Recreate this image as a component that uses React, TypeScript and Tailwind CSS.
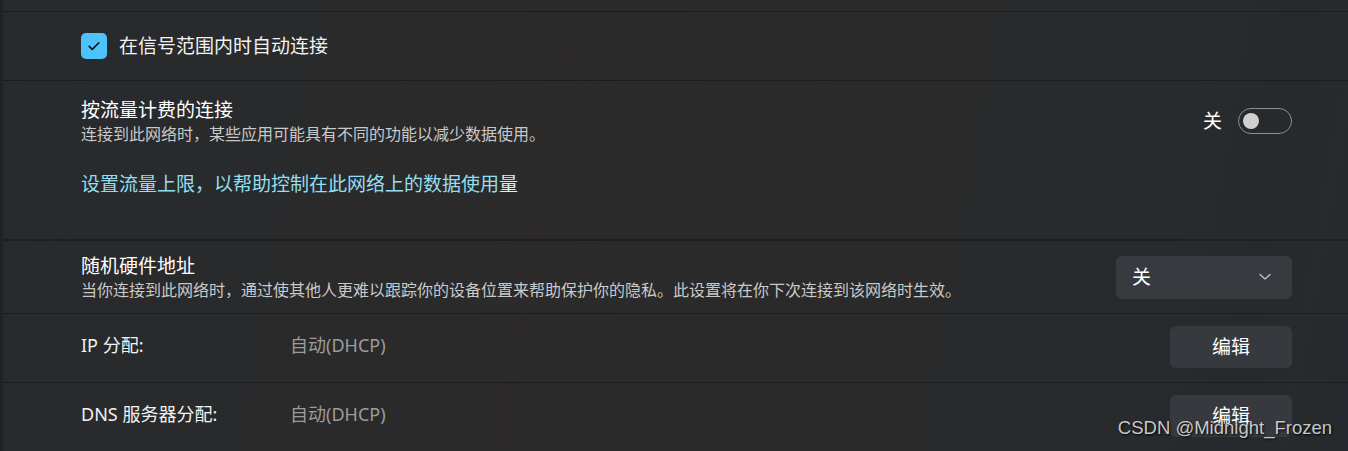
import { type ReactNode } from 'react'

const font = { fontFamily: '"Noto Sans", "Noto Sans CJK SC", sans-serif' }

function Sep({ thick = false }: { thick?: boolean }) {
  return <div className={thick ? 'h-[2px] bg-[#1d1e20]' : 'h-px bg-[#1c1d1f]'} />
}

function Toggle() {
  return (
    <div className="flex h-[26px] w-[54px] items-center rounded-full border border-[#8e8f91] px-[4px]">
      <div className="h-[16px] w-[16px] rounded-full bg-[#d0d0d0]" />
    </div>
  )
}

function ActionButton({ children }: { children: ReactNode }) {
  return (
    <button
      type="button"
      className="flex h-[42px] w-[122px] items-center justify-center rounded-[6px] bg-[#36393d] text-[19px] text-white"
    >
      {children}
    </button>
  )
}

function AddressRow({ label, value }: { label: string; value: string }) {
  return (
    <div className="flex h-[68px] items-center pl-[78px] pr-[56px]">
      <div className="mb-[5px] w-[209px] text-[18px] text-[#f2f2f2]">{label}</div>
      <div className="mb-[5px] flex-1 text-[18px] text-[#9c9c9c]">{value}</div>
      <div className="mb-[2px]">
        <ActionButton>编辑</ActionButton>
      </div>
    </div>
  )
}

export default function App() {
  return (
    <div className="relative flex h-[451px] w-full overflow-hidden" style={font}>
      <div className="w-[3px] bg-[#202326]" />
      <div className="flex-1 bg-[linear-gradient(100deg,#272a2e_0%,#2c2a2a_40%,#2b2a2a_60%,#262a2e_100%)]">
        <div className="h-[11px]" />
        <Sep />

        <div className="flex h-[68px] items-center pl-[78px]">
          <div className="flex h-[26px] w-[26px] items-center justify-center rounded-[5px] bg-[#4cc2ff]">
            <svg width="16" height="16" viewBox="0 0 16 16" fill="none">
              <path d="M3.2 8.4l3.1 3L12.8 4.8" stroke="#111" strokeWidth="1.6" strokeLinecap="round" strokeLinejoin="round" />
            </svg>
          </div>
          <span className="ml-[12px] text-[19px] text-[#f2f2f2]">在信号范围内时自动连接</span>
        </div>
        <Sep />

        <div className="h-[158px] pl-[78px] pr-[56px] pt-[16px]">
          <div className="flex items-center">
            <div className="flex-1">
              <div className="text-[19px] leading-[26px] text-white">按流量计费的连接</div>
              <div className="text-[16px] leading-[22px] text-[#c9c9c9]">连接到此网络时，某些应用可能具有不同的功能以减少数据使用。</div>
            </div>
            <span className="mr-[16px] text-[19px] text-white">关</span>
            <Toggle />
          </div>
          <div className="mt-[26px] text-[19px] leading-[26px] text-[#93dff2]">
            设置流量上限，以帮助控制在此网络上的数据使用<span className="text-[#dcecf0]">量</span>
          </div>
        </div>
        <Sep thick />

        <div className="flex h-[72px] items-center pl-[78px] pr-[56px]">
          <div className="flex-1">
            <div className="text-[19px] leading-[26px] text-white">随机硬件地址</div>
            <div className="text-[16px] leading-[22px] text-[#c9c9c9]">
              当你连接到此网络时，通过使其他人更难以跟踪你的设备位置来帮助保护你的隐私。此设置将在你下次连接到该网络时生效。
            </div>
          </div>
          <div className="flex h-[43px] w-[176px] items-center justify-between rounded-[6px] bg-[#373a3e] pl-[16px] pr-[21px]">
            <span className="text-[19px] text-white">关</span>
            <svg width="12" height="8" viewBox="0 0 12 8" fill="none">
              <path d="M1 1.5l5 4.5 5-4.5" stroke="#c4c4c4" strokeWidth="1.3" strokeLinecap="round" strokeLinejoin="round" />
            </svg>
          </div>
        </div>
        <Sep />

        <AddressRow label="IP 分配:" value="自动(DHCP)" />
        <Sep />
        <AddressRow label="DNS 服务器分配:" value="自动(DHCP)" />
      </div>

      {/* watermark overlay from the source screenshot */}
      <div
        className="absolute bottom-[9px] right-[16px] text-[18.5px] text-[#c8c8c8] [text-shadow:1px_1px_2px_#000]"
        style={{ fontFamily: '"Liberation Sans", Arial, sans-serif' }}
      >
        CSDN @Midnight_Frozen
      </div>
    </div>
  )
}
